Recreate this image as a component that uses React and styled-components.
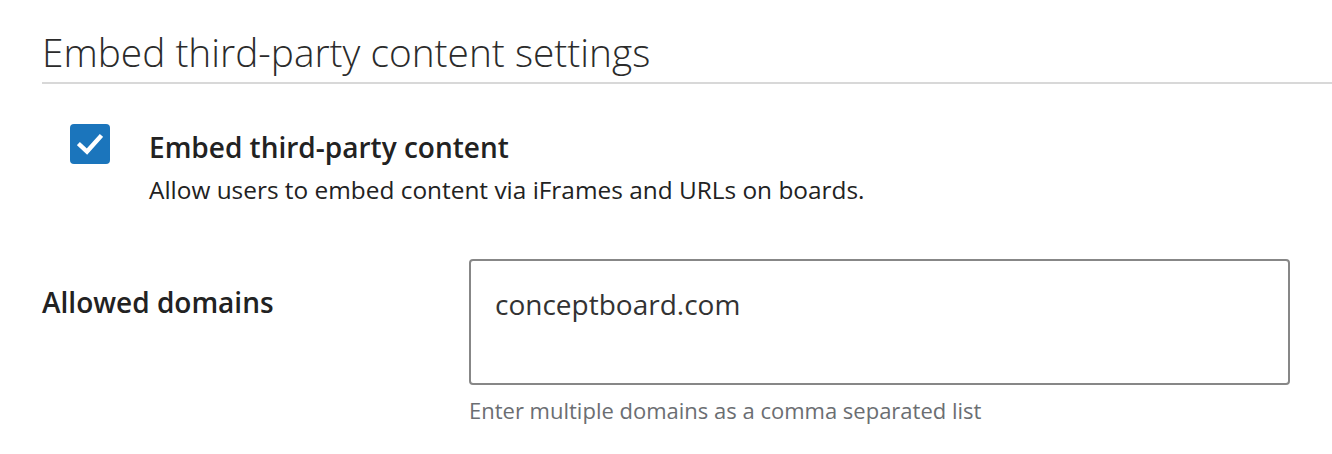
import React from "react";
import styled, { createGlobalStyle } from "styled-components";

const Global = createGlobalStyle`
  html, body { margin: 0; padding: 0; background: #fff; }
  body { font-family: "Open Sans", "Noto Sans", sans-serif; color: #222; }
`;

const Page = styled.div`
  padding: 26px 0 0 42px;
`;

const Heading = styled.h2`
  margin: 0;
  padding-bottom: 4px;
  font-weight: 300;
  font-size: 38.85px;
  line-height: 52px;
  color: #2b2b2b;
  border-bottom: 2px solid #d8d8d8;
`;

const OptionRow = styled.div`
  display: flex;
  align-items: flex-start;
  gap: 39px;
  margin-top: 40px;
  padding-left: 28px;
`;

const Box = styled.span`
  flex: none;
  width: 40px;
  height: 40px;
  border-radius: 4px;
  background: #1b75bc;
  display: flex;
  align-items: center;
  justify-content: center;
`;

const OptionText = styled.div`
  display: flex;
  flex-direction: column;
`;

const OptionTitle = styled.div`
  font-size: 28px;
  font-weight: 600;
  line-height: 46px;
  color: #222;
`;

const OptionDesc = styled.div`
  margin-top: 3px;
  font-size: 24.4px;
  line-height: 34px;
  color: #222;
`;

const FieldRow = styled.div`
  display: grid;
  grid-template-columns: 427px 1fr;
  margin-top: 52px;
  padding-right: 42px;
`;

const FieldLabel = styled.label`
  font-size: 28px;
  font-weight: 600;
  line-height: 38px;
  padding-top: 24px;
  color: #222;
`;

const FieldCol = styled.div`
  display: flex;
  flex-direction: column;
`;

const Input = styled.div`
  height: 126px;
  box-sizing: border-box;
  border: 2px solid #878787;
  border-radius: 4px;
  padding: 24px 24px;
  font-size: 28px;
  line-height: 38px;
  color: #333;
`;

const Help = styled.div`
  margin-top: 10px;
  font-size: 22px;
  line-height: 30px;
  color: #6b6e72;
`;

export default function App() {
  return (
    <>
      <Global />
      <Page>
        <Heading>Embed third-party content settings</Heading>
        <OptionRow>
          <Box>
            <svg width="26" height="22" viewBox="0 0 26 22">
              <path d="M3 12 L10 18.5 L23 4" fill="none" stroke="#fff" strokeWidth="4.4" strokeLinecap="square" />
            </svg>
          </Box>
          <OptionText>
            <OptionTitle>Embed third-party content</OptionTitle>
            <OptionDesc>Allow users to embed content via iFrames and URLs on boards.</OptionDesc>
          </OptionText>
        </OptionRow>
        <FieldRow>
          <FieldLabel>Allowed domains</FieldLabel>
          <FieldCol>
            <Input>conceptboard.com</Input>
            <Help>Enter multiple domains as a comma separated list</Help>
          </FieldCol>
        </FieldRow>
      </Page>
    </>
  );
}
